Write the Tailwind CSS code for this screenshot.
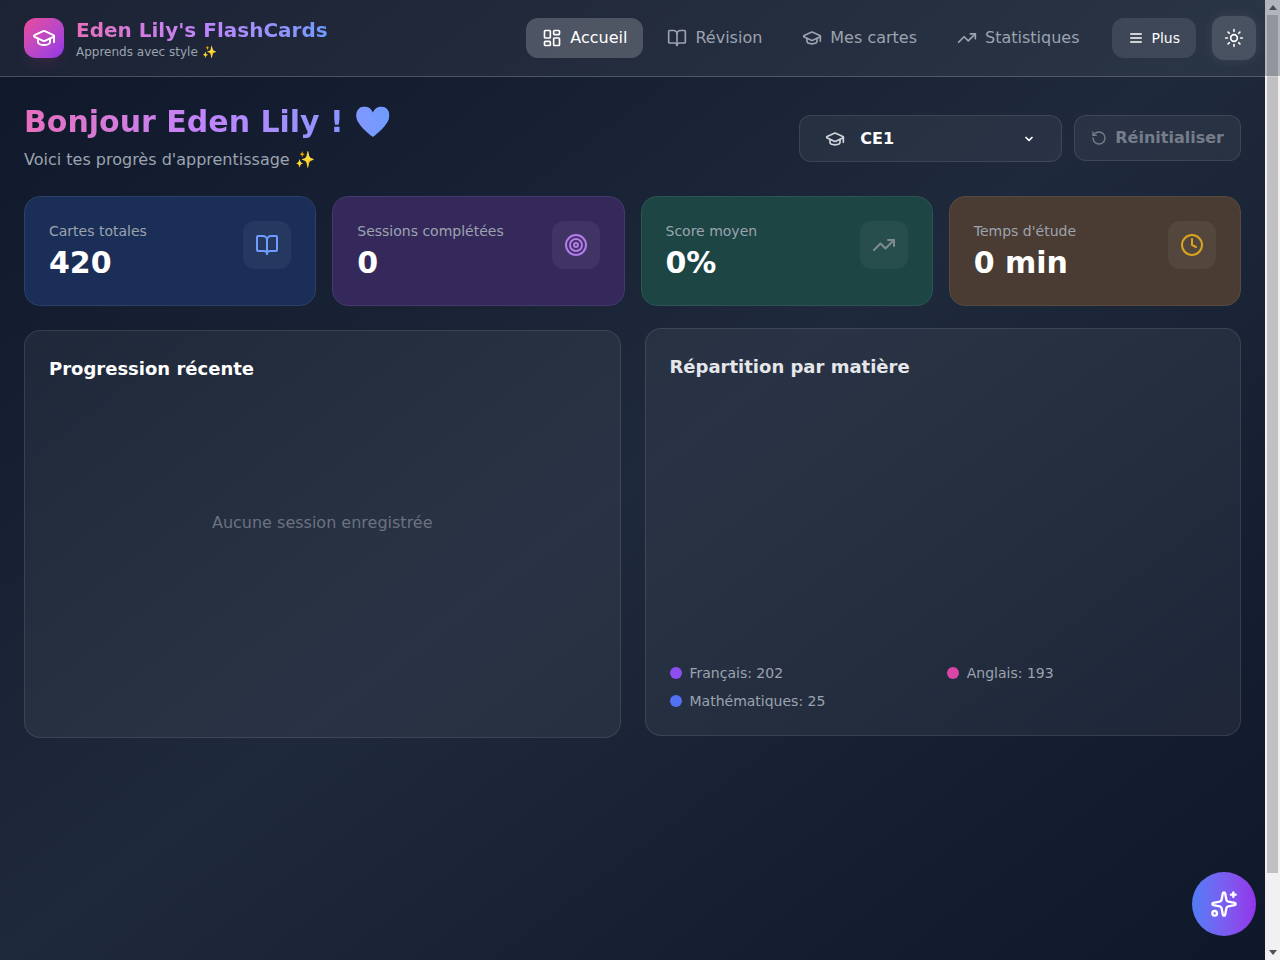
<!DOCTYPE html>
<html lang="fr">
<head>
  <meta charset="UTF-8">
  <meta name="viewport" content="width=device-width, initial-scale=1.0">
  <title>Eden Lily's FlashCards</title>
  <script src="https://cdn.jsdelivr.net/npm/@tailwindcss/browser@4"></script>
</head>
<body class="relative flex h-screen overflow-hidden font-['DejaVu_Sans',sans-serif] text-white">

<!-- contenu -->
<main class="h-full flex-1 overflow-hidden bg-gradient-to-br from-[#0f172a] via-[#1e293b] to-[#0f172a]">
  <div class="px-6 pt-[104px]">

    <div class="flex items-start justify-between">
      <div>
        <h1 class="w-fit bg-gradient-to-r from-[#e66fbd] via-[#c084fc] to-[#6e9bff] bg-clip-text text-3xl font-bold text-transparent">Bonjour Eden Lily ! 💙</h1>
        <p class="mt-2 text-base text-[#9ca3af]">Voici tes progrès d'apprentissage ✨</p>
      </div>
      <div class="mt-[11px] flex items-start gap-3">
        <button class="flex h-[47px] w-[263px] items-center rounded-xl border border-white/10 bg-white/5 pl-[25px] pr-[26px] font-semibold">
          <svg class="h-5 w-5 text-[#d1d5db]" viewBox="0 0 24 24" fill="none" stroke="currentColor" stroke-width="2" stroke-linecap="round" stroke-linejoin="round"><path d="M21.42 10.922a1 1 0 0 0-.019-1.838L12.83 5.18a2 2 0 0 0-1.66 0L2.6 9.08a1 1 0 0 0 0 1.832l8.57 3.908a2 2 0 0 0 1.66 0z"/><path d="M22 10v6"/><path d="M6 12.5V16a6 3 0 0 0 12 0v-3.5"/></svg>
          <span class="ml-[15px] flex-1 text-left">CE1</span>
          <svg class="h-3 w-3" viewBox="0 0 24 24" fill="none" stroke="currentColor" stroke-width="3.5" stroke-linecap="round" stroke-linejoin="round"><path d="m6 9 6 6 6-6"/></svg>
        </button>
        <button class="flex h-[46px] items-center gap-2 rounded-xl border border-white/10 bg-white/5 px-4 font-bold text-[#767d8a]">
          <svg class="h-4 w-4" viewBox="0 0 24 24" fill="none" stroke="currentColor" stroke-width="2" stroke-linecap="round" stroke-linejoin="round"><path d="M3 12a9 9 0 1 0 9-9 9.75 9.75 0 0 0-6.74 2.74L3 8"/><path d="M3 3v5h5"/></svg>
          Réinitialiser
        </button>
      </div>
    </div>

    <!-- stats -->
    <div class="mt-6 grid grid-cols-4 gap-4">
      <div class="flex h-[110px] items-start justify-between rounded-2xl border border-[#2a4068] bg-[#1a2e57] p-6">
        <div>
          <p class="text-sm text-[#9ca3af]">Cartes totales</p>
          <p class="mt-1 text-3xl font-bold">420</p>
        </div>
        <div class="flex h-12 w-12 items-center justify-center rounded-xl bg-white/5 text-[#6f9bff]">
          <svg class="h-6 w-6" viewBox="0 0 24 24" fill="none" stroke="currentColor" stroke-width="2" stroke-linecap="round" stroke-linejoin="round"><path d="M12 7v14"/><path d="M3 18a1 1 0 0 1-1-1V4a1 1 0 0 1 1-1h5a4 4 0 0 1 4 4 4 4 0 0 1 4-4h5a1 1 0 0 1 1 1v13a1 1 0 0 1-1 1h-6a3 3 0 0 0-3 3 3 3 0 0 0-3-3z"/></svg>
        </div>
      </div>
      <div class="flex h-[110px] items-start justify-between rounded-2xl border border-[#46386c] bg-[#35295c] p-6">
        <div>
          <p class="text-sm text-[#9ca3af]">Sessions complétées</p>
          <p class="mt-1 text-3xl font-bold">0</p>
        </div>
        <div class="flex h-12 w-12 items-center justify-center rounded-xl bg-white/5 text-[#b57bee]">
          <svg class="h-6 w-6" viewBox="0 0 24 24" fill="none" stroke="currentColor" stroke-width="2" stroke-linecap="round" stroke-linejoin="round"><circle cx="12" cy="12" r="10"/><circle cx="12" cy="12" r="6"/><circle cx="12" cy="12" r="2"/></svg>
        </div>
      </div>
      <div class="flex h-[110px] items-start justify-between rounded-2xl border border-[#2c5453] bg-[#1c4544] p-6">
        <div>
          <p class="text-sm text-[#9ca3af]">Score moyen</p>
          <p class="mt-1 text-3xl font-bold">0%</p>
        </div>
        <div class="flex h-12 w-12 items-center justify-center rounded-xl bg-white/5 text-[#7f8c8f]">
          <svg class="h-6 w-6" viewBox="0 0 24 24" fill="none" stroke="currentColor" stroke-width="2" stroke-linecap="round" stroke-linejoin="round"><path d="M22 7 13.5 15.5 8.5 10.5 2 17"/><path d="M16 7h6v6"/></svg>
        </div>
      </div>
      <div class="flex h-[110px] items-start justify-between rounded-2xl border border-[#574a40] bg-[#4a3c32] p-6">
        <div>
          <p class="text-sm text-[#9ca3af]">Temps d'étude</p>
          <p class="mt-1 text-3xl font-bold">0 min</p>
        </div>
        <div class="flex h-12 w-12 items-center justify-center rounded-xl bg-white/5 text-[#d9a520]">
          <svg class="h-6 w-6" viewBox="0 0 24 24" fill="none" stroke="currentColor" stroke-width="2" stroke-linecap="round" stroke-linejoin="round"><circle cx="12" cy="12" r="10"/><path d="M12 6v6l4 2"/></svg>
        </div>
      </div>
    </div>

    <!-- graphiques -->
    <div class="mt-6 grid grid-cols-2 items-start gap-6">
      <section class="h-[408px] rounded-2xl border border-white/10 bg-white/5 p-6">
        <h2 class="text-lg font-semibold">Progression récente</h2>
        <div class="mt-3 flex h-64 items-center justify-center text-[#6b7280]">Aucune session enregistrée</div>
      </section>
      <section class="-mt-[2px] flex h-[408px] flex-col justify-between rounded-2xl border border-white/10 bg-white/5 p-6">
        <h2 class="text-lg font-semibold text-[#e5e7eb]">Répartition par matière</h2>
        <div class="grid grid-cols-2 gap-2 text-sm text-[#9ca3af]">
          <div class="flex items-center gap-2"><span class="h-3 w-3 rounded-full bg-[#8b4ff0]"></span>Français: 202</div>
          <div class="flex items-center gap-2"><span class="h-3 w-3 rounded-full bg-[#d946a8]"></span>Anglais: 193</div>
          <div class="flex items-center gap-2"><span class="h-3 w-3 rounded-full bg-[#5272f2]"></span>Mathématiques: 25</div>
        </div>
      </section>
    </div>
  </div>
</main>

<!-- barre de défilement -->
<aside class="flex h-full w-[15px] shrink-0 flex-col items-center bg-[#f1f1f1]">
  <div class="flex h-[15px] w-full items-center justify-center"><span class="h-0 w-0 border-x-[4px] border-b-[5px] border-x-transparent border-b-[#505050]"></span></div>
  <div class="h-[858px] w-[11px] bg-[#c1c1c1]"></div>
  <div class="flex-1"></div>
  <div class="flex h-[15px] w-full items-center justify-center"><span class="h-0 w-0 border-x-[4px] border-t-[5px] border-x-transparent border-t-[#505050]"></span></div>
</aside>

<!-- barre du haut -->
<header class="absolute inset-x-0 top-0 flex h-[77px] items-center justify-between border-b border-white/20 bg-white/5 px-6">
  <span class="absolute inset-y-0 right-0 w-[15px] bg-[#1e293b]/30"></span>
  <div class="flex items-center gap-3">
    <div class="flex h-10 w-10 items-center justify-center rounded-xl bg-gradient-to-br from-[#ec4899] to-[#9333ea] shadow-lg shadow-pink-500/10">
      <svg class="h-6 w-6" viewBox="0 0 24 24" fill="none" stroke="currentColor" stroke-width="2" stroke-linecap="round" stroke-linejoin="round"><path d="M21.42 10.922a1 1 0 0 0-.019-1.838L12.83 5.18a2 2 0 0 0-1.66 0L2.6 9.08a1 1 0 0 0 0 1.832l8.57 3.908a2 2 0 0 0 1.66 0z"/><path d="M22 10v6"/><path d="M6 12.5V16a6 3 0 0 0 12 0v-3.5"/></svg>
    </div>
    <div>
      <div class="w-fit bg-gradient-to-r from-[#e66fbd] via-[#c084fc] to-[#6e9bff] bg-clip-text text-xl leading-7 font-bold text-transparent">Eden Lily's FlashCards</div>
      <div class="text-xs text-[#9ca3af]">Apprends avec style ✨</div>
    </div>
  </div>
  <div class="relative flex items-center gap-4">
    <nav class="flex items-center gap-2 text-[#9ca3af]">
      <a class="flex h-10 items-center gap-2 rounded-xl bg-white/20 px-4 text-white">
        <svg class="h-5 w-5" viewBox="0 0 24 24" fill="none" stroke="currentColor" stroke-width="2" stroke-linecap="round" stroke-linejoin="round"><rect width="7" height="9" x="3" y="3" rx="1"/><rect width="7" height="5" x="14" y="3" rx="1"/><rect width="7" height="9" x="14" y="12" rx="1"/><rect width="7" height="5" x="3" y="16" rx="1"/></svg>
        Accueil
      </a>
      <a class="flex h-10 items-center gap-2 rounded-xl px-4">
        <svg class="h-5 w-5" viewBox="0 0 24 24" fill="none" stroke="currentColor" stroke-width="2" stroke-linecap="round" stroke-linejoin="round"><path d="M12 7v14"/><path d="M3 18a1 1 0 0 1-1-1V4a1 1 0 0 1 1-1h5a4 4 0 0 1 4 4 4 4 0 0 1 4-4h5a1 1 0 0 1 1 1v13a1 1 0 0 1-1 1h-6a3 3 0 0 0-3 3 3 3 0 0 0-3-3z"/></svg>
        Révision
      </a>
      <a class="flex h-10 items-center gap-2 rounded-xl px-4">
        <svg class="h-5 w-5" viewBox="0 0 24 24" fill="none" stroke="currentColor" stroke-width="2" stroke-linecap="round" stroke-linejoin="round"><path d="M21.42 10.922a1 1 0 0 0-.019-1.838L12.83 5.18a2 2 0 0 0-1.66 0L2.6 9.08a1 1 0 0 0 0 1.832l8.57 3.908a2 2 0 0 0 1.66 0z"/><path d="M22 10v6"/><path d="M6 12.5V16a6 3 0 0 0 12 0v-3.5"/></svg>
        Mes cartes
      </a>
      <a class="flex h-10 items-center gap-2 rounded-xl px-4">
        <svg class="h-5 w-5" viewBox="0 0 24 24" fill="none" stroke="currentColor" stroke-width="2" stroke-linecap="round" stroke-linejoin="round"><path d="M22 7 13.5 15.5 8.5 10.5 2 17"/><path d="M16 7h6v6"/></svg>
        Statistiques
      </a>
    </nav>
    <button class="flex h-10 items-center gap-2 rounded-xl bg-white/10 px-4 text-sm">
      <svg class="h-4 w-4" viewBox="0 0 24 24" fill="none" stroke="currentColor" stroke-width="2" stroke-linecap="round" stroke-linejoin="round"><path d="M4 12h16"/><path d="M4 6h16"/><path d="M4 18h16"/></svg>
      Plus
    </button>
    <button class="flex h-11 w-11 items-center justify-center rounded-xl bg-white/15 shadow-[0_0_12px_rgba(255,255,255,0.08)]">
      <svg class="h-5 w-5" viewBox="0 0 24 24" fill="none" stroke="currentColor" stroke-width="2" stroke-linecap="round" stroke-linejoin="round"><circle cx="12" cy="12" r="4"/><path d="M12 2v2"/><path d="M12 20v2"/><path d="m4.93 4.93 1.41 1.41"/><path d="m17.66 17.66 1.41 1.41"/><path d="M2 12h2"/><path d="M20 12h2"/><path d="m6.34 17.66-1.41 1.41"/><path d="m19.07 4.93-1.41 1.41"/></svg>
    </button>
  </div>
</header>

<!-- bouton flottant -->
<button class="absolute right-6 bottom-6 flex h-16 w-16 items-center justify-center rounded-full bg-gradient-to-r from-[#4f7cf5] to-[#9333ea]">
  <svg class="h-7 w-7" viewBox="0 0 24 24" fill="none" stroke="currentColor" stroke-width="2" stroke-linecap="round" stroke-linejoin="round"><path d="M11.017 2.814a1 1 0 0 1 1.966 0l1.051 5.558a2 2 0 0 0 1.594 1.594l5.558 1.051a1 1 0 0 1 0 1.966l-5.558 1.051a2 2 0 0 0-1.594 1.594l-1.051 5.558a1 1 0 0 1-1.966 0l-1.051-5.558a2 2 0 0 0-1.594-1.594l-5.558-1.051a1 1 0 0 1 0-1.966l5.558-1.051a2 2 0 0 0 1.594-1.594z"/><path d="M20 2v4"/><path d="M22 4h-4"/><circle cx="4" cy="20" r="2"/></svg>
</button>

</body>
</html>
